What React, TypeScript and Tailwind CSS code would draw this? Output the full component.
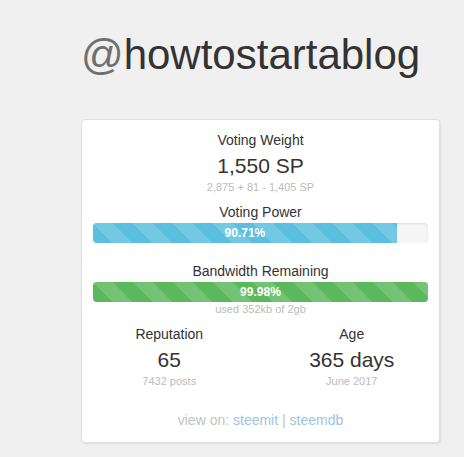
const stripes =
  'bg-[linear-gradient(45deg,rgba(255,255,255,.15)_25%,transparent_25%,transparent_50%,rgba(255,255,255,.15)_50%,rgba(255,255,255,.15)_75%,transparent_75%,transparent)] bg-[length:40px_40px]';

function Bar({ pct, color }: { pct: string; color: string }) {
  return (
    <div className="h-5 w-full overflow-hidden rounded bg-[#f5f5f5] shadow-[inset_0_1px_2px_rgba(0,0,0,0.1)]">
      <div
        className={`h-full text-center text-xs leading-5 font-bold text-white ${color} ${stripes}`}
        style={{ width: pct }}
      >
        {pct}
      </div>
    </div>
  );
}

export default function App() {
  return (
    <div
      className="h-[457px] w-full bg-[#f0f0f0] pt-[32px] pl-[81px] text-[#333]"
      style={{ fontFamily: '"Liberation Sans", Arial, sans-serif' }}
    >
      <h1 className="text-[42px] leading-[46px]">
        <span className="text-[#6f6f6f]">@</span>howtostartablog
      </h1>

      <div className="mt-[41px] w-[359px] rounded border border-[#e0e0e0] bg-white px-[11px] pt-[10px] pb-[12px] text-center shadow-[1px_1px_2px_rgba(0,0,0,0.08)]">
        <div className="text-sm leading-5">Voting Weight</div>
        <div className="mt-1 text-[21px] leading-6">1,550 SP</div>
        <div className="mt-[2px] text-[11px] leading-[15px] text-[#bbb]">2,875 + 81 - 1,405 SP</div>

        <div className="mt-[7px] text-sm leading-5">Voting Power</div>
        <div className="mt-[1px]">
          <Bar pct="90.71%" color="bg-[#5bc0de]" />
        </div>

        <div className="mt-[18px] text-sm leading-5">Bandwidth Remaining</div>
        <div className="mt-[1px]">
          <Bar pct="99.98%" color="bg-[#5cb85c]" />
        </div>
        <div className="text-[11px] leading-[15px] text-[#bbb]">used 352kb of 2gb</div>

        <div className="-mx-[15px] mt-[7px] grid grid-cols-2">
          <div>
            <div className="text-sm leading-5">Reputation</div>
            <div className="mt-1 text-[21px] leading-6">65</div>
            <div className="mt-[2px] text-[11px] leading-[15px] text-[#bbb]">7432 posts</div>
          </div>
          <div>
            <div className="text-sm leading-5">Age</div>
            <div className="mt-1 text-[21px] leading-6">365 days</div>
            <div className="mt-[2px] text-[11px] leading-[15px] text-[#bbb]">June 2017</div>
          </div>
        </div>

        <div className="mt-[21px] text-sm leading-5 text-[#c2c2c2]">
          view on: <a className="text-[#9fc3e0]">steemit</a> | <a className="text-[#9fc3e0]">steemdb</a>
        </div>
      </div>
    </div>
  );
}
